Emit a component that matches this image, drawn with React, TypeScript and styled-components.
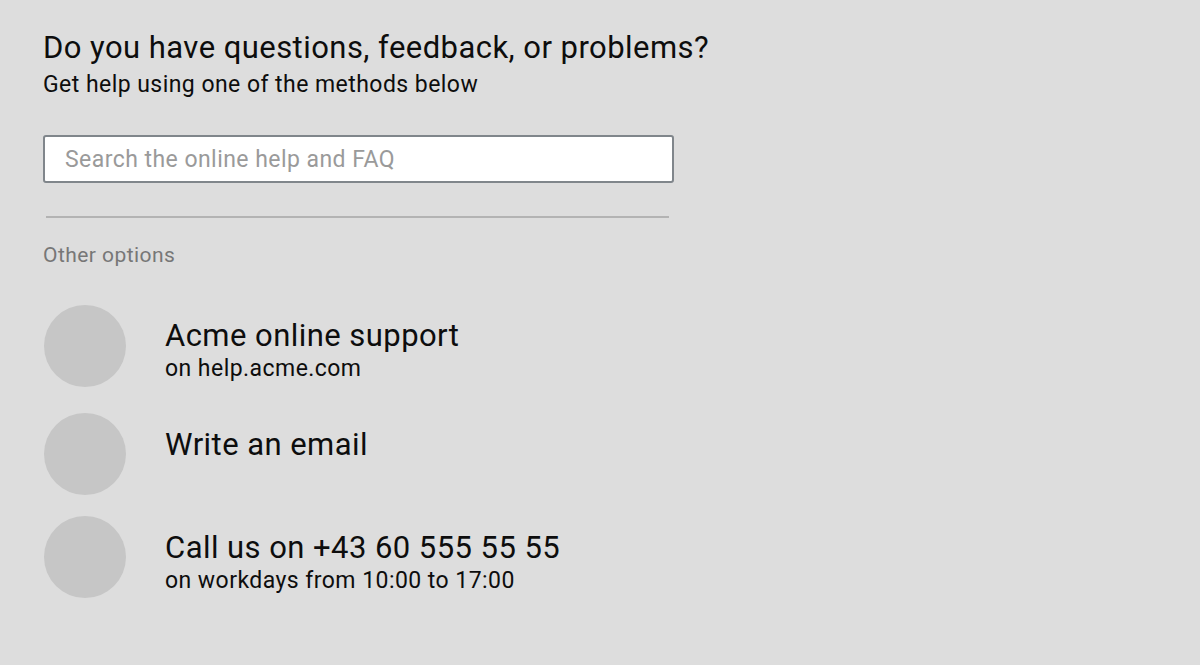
import styled, { createGlobalStyle } from "styled-components";

const GlobalStyle = createGlobalStyle`
  html, body {
    margin: 0;
    padding: 0;
    background: #dddddd;
  }
  body {
    font-family: Roboto, "Noto Sans", sans-serif;
    letter-spacing: 0.45px;
    color: #0d0d0d;
  }
`;

const Page = styled.main`
  width: 1200px;
  height: 665px;
  box-sizing: border-box;
  padding: 30px 43px 0;
  background: #dddddd;
`;

const Header = styled.header`
  display: flex;
  flex-direction: column;
  gap: 7px;
`;

const Title = styled.h1`
  margin: 0;
  font-size: 31px;
  line-height: 35px;
  font-weight: 400;
  color: #0d0d0d;
`;

const Subtitle = styled.p`
  margin: 0;
  font-size: 23px;
  line-height: 26px;
  color: #0d0d0d;
`;

const SearchInput = styled.input`
  display: block;
  box-sizing: border-box;
  width: 631px;
  height: 48px;
  margin-top: 37px;
  padding: 0 20px;
  border: 2px solid #80868b;
  border-radius: 3px;
  background: #ffffff;
  font-family: Roboto, sans-serif;
  font-size: 23px;
  letter-spacing: 0.45px;
  color: #0d0d0d;
  outline: none;

  &::placeholder {
    color: #9a9a9a;
  }
`;

const Divider = styled.hr`
  width: 623px;
  height: 2px;
  margin: 33px 0 0 3px;
  border: none;
  background: #b3b3b3;
`;

const SectionLabel = styled.div`
  margin-top: 25px;
  font-size: 21px;
  line-height: 24px;
  color: #777777;
`;

const OptionList = styled.ul`
  list-style: none;
  margin: 38px 0 0 1px;
  padding: 0;
  display: flex;
  flex-direction: column;
`;

const OptionRow = styled.li<{ $space: number; $offset: number }>`
  display: flex;
  align-items: flex-start;
  gap: 39px;
  margin-bottom: ${(p) => p.$space}px;

  & > div:last-child {
    padding-top: ${(p) => p.$offset}px;
  }
`;

const Avatar = styled.div`
  width: 82px;
  height: 82px;
  flex-shrink: 0;
  border-radius: 50%;
  background: #c6c6c6;
`;

const OptionText = styled.div`
  display: flex;
  flex-direction: column;
  gap: 3px;
`;

const OptionTitle = styled.span`
  font-size: 31px;
  line-height: 35px;
  color: #0d0d0d;
`;

const OptionNote = styled.span`
  font-size: 23px;
  line-height: 26px;
  color: #0d0d0d;
`;

const options = [
  { title: "Acme online support", note: "on help.acme.com", space: 26, offset: 13 },
  { title: "Write an email", note: "", space: 21, offset: 14 },
  { title: "Call us on +43 60 555 55 55", note: "on workdays from 10:00 to 17:00", space: 0, offset: 14 },
];

export default function App() {
  return (
    <>
      <GlobalStyle />
      <Page>
        <Header>
          <Title>Do you have questions, feedback, or problems?</Title>
          <Subtitle>Get help using one of the methods below</Subtitle>
        </Header>

        <SearchInput type="text" placeholder="Search the online help and FAQ" />

        <Divider />

        <SectionLabel>Other options</SectionLabel>

        <OptionList>
          {options.map((o) => (
            <OptionRow key={o.title} $space={o.space} $offset={o.offset}>
              <Avatar />
              <OptionText>
                <OptionTitle>{o.title}</OptionTitle>
                {o.note && <OptionNote>{o.note}</OptionNote>}
              </OptionText>
            </OptionRow>
          ))}
        </OptionList>
      </Page>
    </>
  );
}
